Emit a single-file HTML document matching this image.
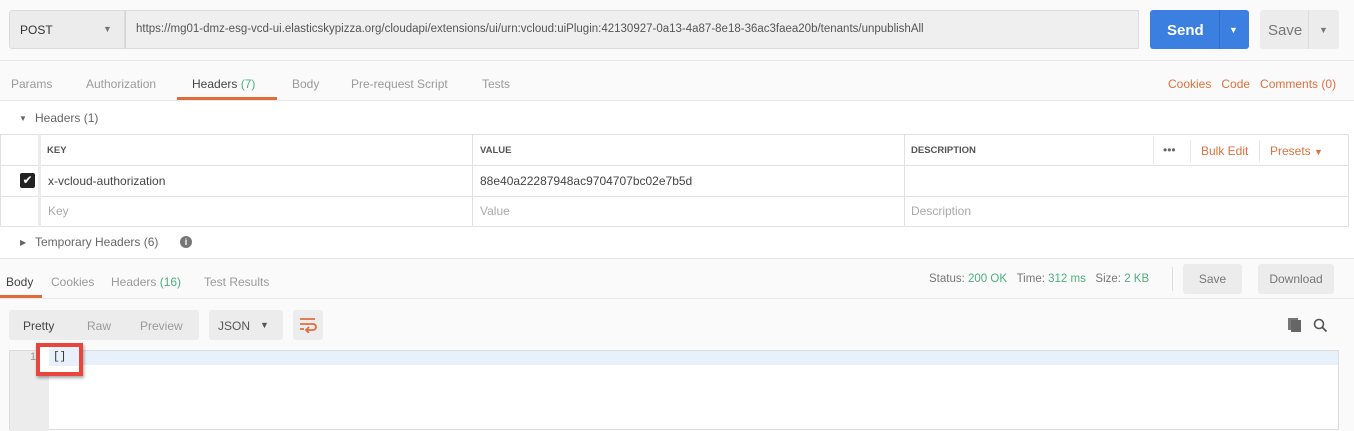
<!DOCTYPE html>
<html><head><style>
*{box-sizing:border-box;margin:0;padding:0}
body{width:1354px;height:426px;overflow:hidden;background:#fafafa;font-family:"Liberation Sans",sans-serif;font-size:12px;color:#505050;position:relative}
.a{position:absolute;white-space:nowrap}
.g{color:#9a9a9a}
.o{color:#e0703c}
.gr{color:#4caf7d}
.bx{position:absolute;border:1px solid #e2e2e2}
</style></head><body>
<div class="a" style="left:9px;top:10px;width:116px;height:39px;background:#ececec;border:1px solid #dcdcdc;border-radius:3px 0 0 3px"></div>
<div class="a" style="left:20px;top:23px;font-size:12px;color:#333">POST</div>
<div class="a" style="left:103px;top:24px;font-size:9px;color:#777">▼</div>
<div class="a" style="left:125px;top:10px;width:1014px;height:39px;background:#efefef;border:1px solid #dcdcdc;border-left:1px solid #d4d4d4"></div>
<div class="a" style="left:136px;top:23px;font-size:11.5px;color:#555">https://mg01-dmz-esg-vcd-ui.elasticskypizza.org/cloudapi/extensions/ui/urn:vcloud:uiPlugin:42130927-0a13-4a87-8e18-36ac3faea20b/tenants/unpublishAll</div>
<div class="a" style="left:1150px;top:10px;width:99px;height:39px;background:#3b7fe0;border-radius:3px"></div>
<div class="a" style="left:1219px;top:10px;width:1px;height:39px;background:#2f6ec8"></div>
<div class="a" style="left:1167px;top:22px;font-size:15px;font-weight:bold;color:#fff">Send</div>
<div class="a" style="left:1229px;top:25px;font-size:9px;color:#fff">▼</div>
<div class="a" style="left:1260px;top:10px;width:79px;height:39px;background:#ececec;border-radius:3px"></div>
<div class="a" style="left:1308px;top:10px;width:1px;height:39px;background:#ddd"></div>
<div class="a" style="left:1268px;top:22px;font-size:15px;color:#777">Save</div>
<div class="a" style="left:1319px;top:25px;font-size:9px;color:#777">▼</div>
<div class="a" style="left:0;top:60px;width:1354px;height:1px;background:#e8e8e8"></div>
<div class="a g" style="left:11px;top:77px">Params</div>
<div class="a g" style="left:86px;top:77px">Authorization</div>
<div class="a" style="left:192px;top:77px;color:#444">Headers <span class="gr">(7)</span></div>
<div class="a g" style="left:292px;top:77px">Body</div>
<div class="a g" style="left:351px;top:77px">Pre-request Script</div>
<div class="a g" style="left:482px;top:77px">Tests</div>
<div class="a" style="left:177px;top:97px;width:100px;height:3px;background:#e06c3c"></div>
<div class="a o" style="left:1168px;top:77px">Cookies&nbsp;&nbsp;&nbsp;Code&nbsp;&nbsp;&nbsp;Comments (0)</div>
<div class="a" style="left:0;top:100px;width:1354px;height:1px;background:#e8e8e8"></div>
<div class="a" style="left:0;top:101px;width:1354px;height:157px;background:#fff"></div>
<div class="a" style="left:19px;top:114px;font-size:8px;color:#666">▼</div>
<div class="a" style="left:35px;top:111px;color:#666">Headers (1)</div>
<div class="bx" style="left:0;top:134px;width:1349px;height:93px;background:#fff"></div>
<div class="a" style="left:0;top:165px;width:1349px;height:1px;background:#e2e2e2"></div>
<div class="a" style="left:0;top:196px;width:1349px;height:1px;background:#e2e2e2"></div>
<div class="a" style="left:38px;top:134px;width:3px;height:93px;background:#ececec"></div>
<div class="a" style="left:472px;top:134px;width:1px;height:93px;background:#e2e2e2"></div>
<div class="a" style="left:904px;top:134px;width:1px;height:93px;background:#e2e2e2"></div>
<div class="a" style="left:1153px;top:136px;width:1px;height:28px;background:#e8e8e8"></div>
<div class="a" style="left:1190px;top:140px;width:1px;height:22px;background:#e8e8e8"></div>
<div class="a" style="left:1259px;top:140px;width:1px;height:22px;background:#e8e8e8"></div>
<div class="a" style="left:47px;top:145px;font-size:9.5px;font-weight:bold;color:#555">KEY</div>
<div class="a" style="left:480px;top:145px;font-size:9.5px;font-weight:bold;color:#555">VALUE</div>
<div class="a" style="left:911px;top:145px;font-size:9.5px;font-weight:bold;color:#555">DESCRIPTION</div>
<div class="a" style="left:1163px;top:143px;color:#666;font-size:12px">•••</div>
<div class="a o" style="left:1201px;top:144px">Bulk Edit</div>
<div class="a o" style="left:1270px;top:144px">Presets <span style="font-size:9px">▼</span></div>
<div class="a" style="left:20px;top:173px;width:15px;height:15px;background:#222;border-radius:2px;color:#fff;font-size:12px;line-height:15px;text-align:center">✔</div>
<div class="a" style="left:48px;top:174px;color:#444">x-vcloud-authorization</div>
<div class="a" style="left:480px;top:174px;color:#444">88e40a22287948ac9704707bc02e7b5d</div>
<div class="a" style="left:48px;top:204px;color:#aaa">Key</div>
<div class="a" style="left:480px;top:204px;color:#aaa">Value</div>
<div class="a" style="left:911px;top:204px;color:#aaa">Description</div>
<div class="a" style="left:20px;top:238px;font-size:8px;color:#666">▶</div>
<div class="a" style="left:35px;top:235px;color:#666">Temporary Headers (6)</div>
<div class="a" style="left:180px;top:236px;width:12px;height:12px;border-radius:50%;background:#777;color:#fff;font-size:9px;font-weight:bold;text-align:center;line-height:12px">i</div>
<div class="a" style="left:0;top:258px;width:1354px;height:1px;background:#e4e4e4"></div>
<div class="a" style="left:6px;top:275px;color:#444">Body</div>
<div class="a g" style="left:51px;top:275px">Cookies</div>
<div class="a g" style="left:111px;top:275px">Headers <span class="gr">(16)</span></div>
<div class="a g" style="left:204px;top:275px">Test Results</div>
<div class="a" style="left:0;top:295px;width:42px;height:3px;background:#e06c3c"></div>
<div class="a" style="left:929px;top:273px;font-size:11.5px;color:#777">Status: <span class="gr">200 OK</span>&nbsp;&nbsp;&nbsp;Time: <span class="gr">312 ms</span>&nbsp;&nbsp;&nbsp;Size: <span class="gr">2 KB</span></div>
<div class="a" style="left:1172px;top:267px;width:1px;height:24px;background:#ddd"></div>
<div class="a" style="left:1183px;top:264px;width:59px;height:30px;background:#ececec;border-radius:3px;text-align:center;line-height:30px;color:#777">Save</div>
<div class="a" style="left:1258px;top:264px;width:76px;height:30px;background:#ececec;border-radius:3px;text-align:center;line-height:30px;color:#777">Download</div>
<div class="a" style="left:0;top:298px;width:1354px;height:1px;background:#e8e8e8"></div>
<div class="a" style="left:9px;top:310px;width:190px;height:30px;background:#ececec;border-radius:3px"></div>
<div class="a" style="left:23px;top:319px;color:#444">Pretty</div>
<div class="a g" style="left:87px;top:319px">Raw</div>
<div class="a g" style="left:140px;top:319px">Preview</div>
<div class="a" style="left:209px;top:310px;width:74px;height:30px;background:#ececec;border-radius:3px"></div>
<div class="a" style="left:218px;top:319px;color:#555">JSON</div>
<div class="a" style="left:260px;top:320px;font-size:9px;color:#555">▼</div>
<div class="a" style="left:293px;top:310px;width:30px;height:30px;background:#ececec;border-radius:3px"></div>
<svg class="a" style="left:299px;top:317px" width="18" height="16" viewBox="0 0 18 16"><path d="M1 2h15M1 7h13a3 3 0 0 1 0 6H8M10 10l-3 3 3 3M1 12h4" fill="none" stroke="#e06c3c" stroke-width="1.8"/></svg>
<div class="a" style="left:1288px;top:318px;width:10px;height:12px;background:#777"></div>
<div class="a" style="left:1291px;top:320px;width:10px;height:12px;background:#666"></div>
<svg class="a" style="left:1313px;top:318px" width="15" height="15" viewBox="0 0 15 15"><circle cx="6" cy="6" r="4.5" fill="none" stroke="#555" stroke-width="1.6"/><path d="M9.5 9.5l4 4" stroke="#555" stroke-width="1.8"/></svg>
<div class="a" style="left:9px;top:350px;width:1330px;height:80px;background:#fff;border:1px solid #ddd"></div>
<div class="a" style="left:10px;top:351px;width:39px;height:80px;background:#ececec"></div>
<div class="a" style="left:49px;top:351px;width:1289px;height:14px;background:#e8f0fb"></div>
<div class="a" style="left:30px;top:351px;font-size:11px;color:#999">1</div>
<div class="a" style="left:36px;top:343px;width:47px;height:33px;border:4px solid #e8453c;background:#fff;box-shadow:1px 2px 3px rgba(0,0,0,.35)"></div>
<div class="a" style="left:49px;top:347px;width:30px;height:19px;background:#e8f0fb"></div>
<div class="a" style="left:53px;top:351px;font-family:'Liberation Mono',monospace;font-size:11px;color:#333">[]</div>
</body></html>
